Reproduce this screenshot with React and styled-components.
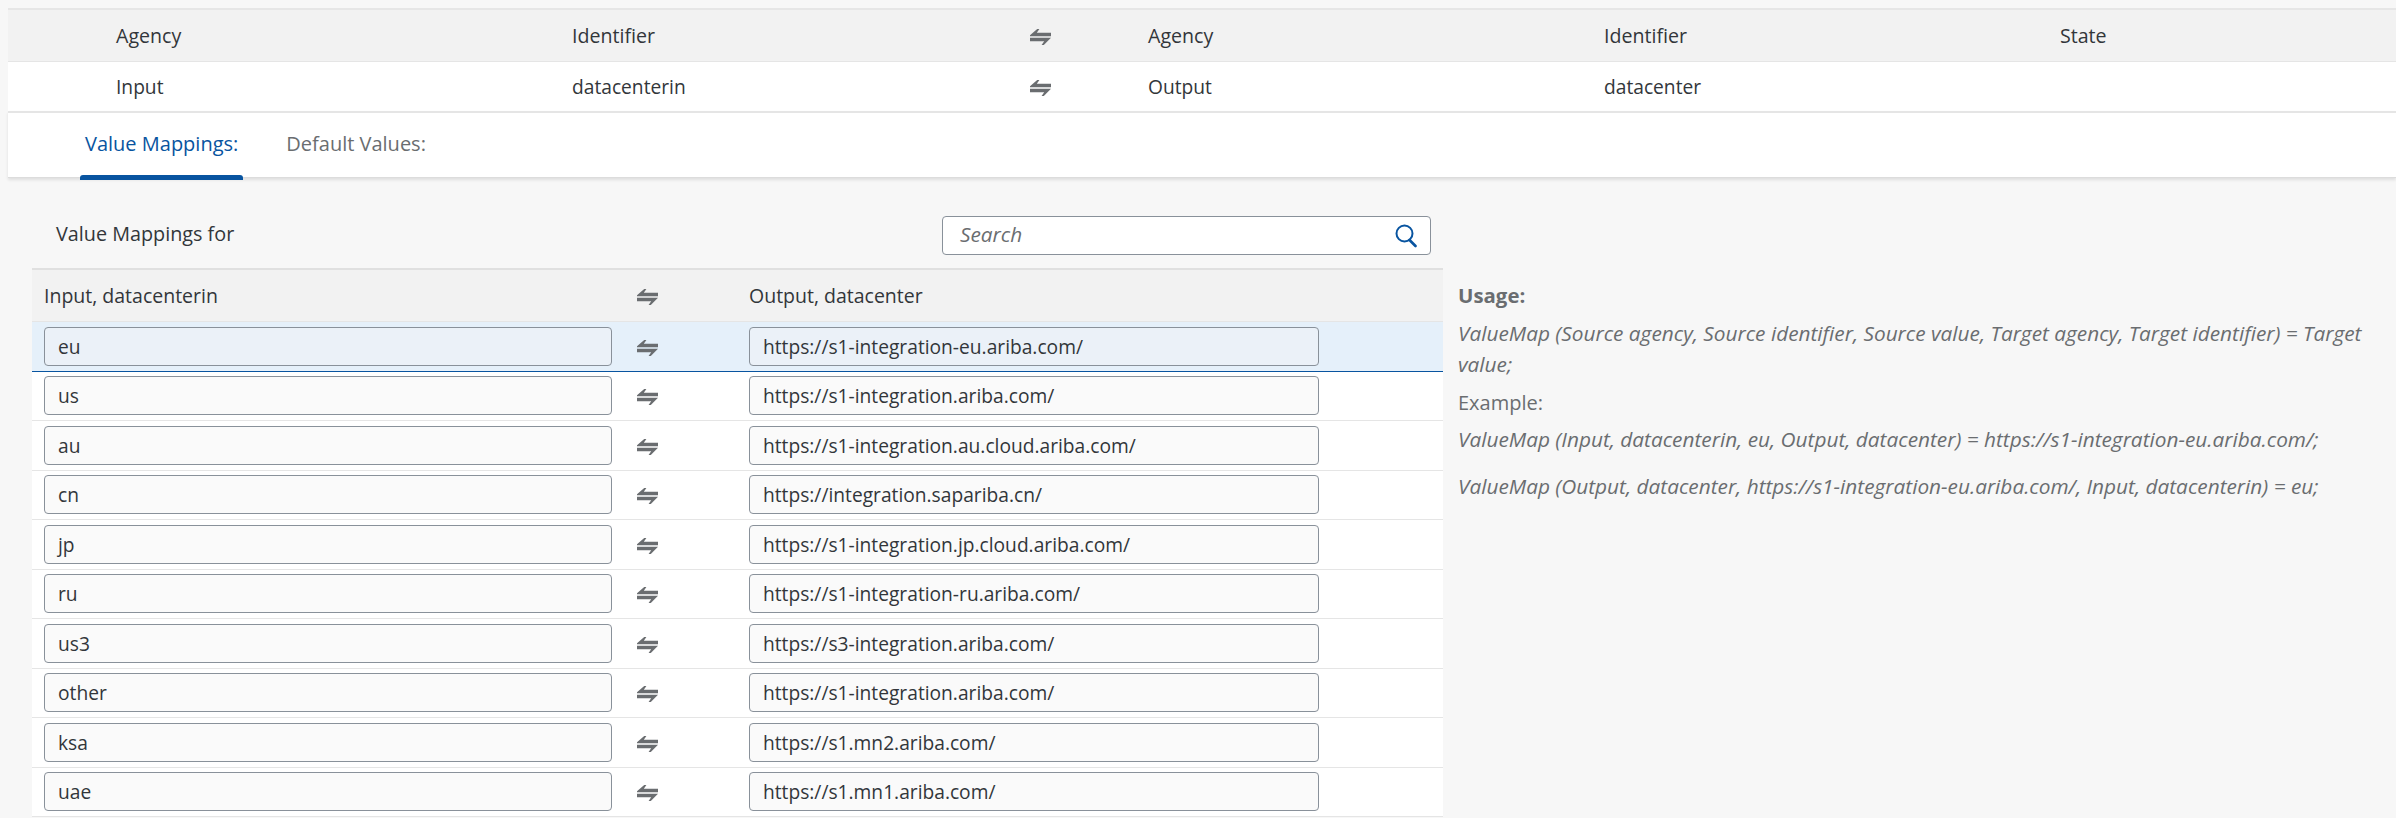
import React from "react";
import styled, { createGlobalStyle } from "styled-components";

const Global = createGlobalStyle`
  html, body { margin: 0; padding: 0; background: #f7f7f7; height: 818px; overflow: hidden; }
  body { font-family: "Open Sans", "Noto Sans", sans-serif; font-size: 19.2px; color: #32363a; }
  * { box-sizing: border-box; }
`;

const Page = styled.div`
  padding: 8px 0 0 8px;
  height: 818px;
  overflow: hidden;
`;

const SummaryGrid = styled.div`
  display: grid;
  grid-template-columns: 456px 458px 118px 456px 456px 1fr;
  align-items: center;
  padding-left: 108px;
  height: ${p => p.$header ? "54px" : "49px"};
  font-size: ${p => p.$header ? "19.6px" : "19.2px"};
  background: ${p => p.$header ? "#f2f2f2" : "#fff"};
  border-top: ${p => p.$header ? "2px solid #e6e6e6" : "none"};
  border-bottom: ${p => p.$header ? "1px solid #e5e5e5" : "none"};
`;

const Tabs = styled.div`
  display: flex;
  height: 67px;
  padding-left: 72px;
  gap: 38px;
  background: #fff;
  border-top: 2px solid #e5e5e5;
  border-bottom: 1px solid #dcdcdc;
  box-shadow: 0 2px 3px rgba(0, 0, 0, 0.1);
`;

const Tab = styled.div`
  position: relative;
  padding: 20px 5px 0;
  height: 65px;
  font-size: 20px;
  line-height: 22px;
  color: ${p => p.$active ? "#0854a0" : "#6a6d70"};
  &::after {
    content: "";
    display: ${p => p.$active ? "block" : "none"};
    position: absolute;
    left: 0;
    right: 0;
    bottom: -2px;
    height: 5px;
    background: #0854a0;
    border-radius: 3px 3px 0 0;
  }
`;

const Main = styled.div`
  display: flex;
  padding-left: 24px;
`;

const Left = styled.div`
  width: 1411px;
  flex: none;
`;

const Toolbar = styled.div`
  display: flex;
  align-items: center;
  justify-content: space-between;
  height: 90px;
  padding: 37px 12px 12px 24px;
`;

const ToolbarLabel = styled.div`
  font-size: 19.8px;
  line-height: 26px;
  padding-bottom: 3px;
`;

const SearchBox = styled.div`
  display: flex;
  align-items: center;
  justify-content: space-between;
  width: 489px;
  height: 39px;
  padding: 0 13px 0 17px;
  background: #fff;
  border: 1px solid #89919a;
  border-radius: 4px;
  color: #6a6d70;
  font-style: italic;
  font-size: 20.8px;
`;

const SearchText = styled.span`
  padding-bottom: 3px;
`;

const TableHead = styled.div`
  display: grid;
  grid-template-columns: 593px 112px 1fr;
  align-items: center;
  height: 54px;
  padding-left: 12px;
  font-size: 19.5px;
  background: #f2f2f2;
  border-top: 2px solid #e0e0e0;
  border-bottom: 1px solid #e5e5e5;
`;

const Row = styled.div`
  display: grid;
  grid-template-columns: 593px 112px 1fr;
  align-items: center;
  height: 49.5px;
  padding: 1px 0 0 12px;
  background: ${p => p.$selected ? "#e5f0fa" : "#fff"};
  border-bottom: 1px solid ${p => p.$selected ? "#0854a0" : "#e5e5e5"};
`;

const Field = styled.div`
  display: flex;
  align-items: center;
  width: ${p => p.$wide ? "570px" : "568px"};
  height: 39px;
  padding: 0 13px;
  background: ${p => p.$selected ? "#ebf1f8" : "#fafafa"};
  border: 1px solid #89919a;
  border-radius: 4px;
  margin-top: -1px;
`;

const Panel = styled.div`
  flex: none;
  width: 925px;
  margin-left: 15px;
  padding-top: 102px;
  color: #6a6d70;
  line-height: 31px;
`;

const Title = styled.div`
  font-weight: 700;
  font-size: 20.4px;
`;

const Formula = styled.div`
  font-style: italic;
  font-size: 20.8px;
  margin-top: ${p => p.$gap}px;
`;

const Caption = styled.div`
  font-size: 20px;
  margin-top: 7px;
`;

const IconSvg = styled.svg`
  display: block;
  width: 21px;
  height: 16px;
  fill: #6a6d70;
  margin-top: 2px;
`;

const SwapIcon = () => (
  <IconSvg viewBox="0 0 21 16">
    <path d="M0 6.2 7.2 0H9.4L6.8 3.8H21V7.2H0Z" />
    <path d="M0 8.8H21L13.8 16H11.6L14.2 12.2H0Z" />
  </IconSvg>
);

const SearchIcon = () => (
  <svg width="22" height="24" viewBox="0 0 22 24" fill="none" stroke="#0854a0" strokeWidth="2">
    <circle cx="9.5" cy="9.5" r="8" />
    <path d="M14.5 16 20.5 22" strokeWidth="2.6" strokeLinecap="round" />
  </svg>
);

const rows = [
  ["eu", "https://s1-integration-eu.ariba.com/"],
  ["us", "https://s1-integration.ariba.com/"],
  ["au", "https://s1-integration.au.cloud.ariba.com/"],
  ["cn", "https://integration.sapariba.cn/"],
  ["jp", "https://s1-integration.jp.cloud.ariba.com/"],
  ["ru", "https://s1-integration-ru.ariba.com/"],
  ["us3", "https://s3-integration.ariba.com/"],
  ["other", "https://s1-integration.ariba.com/"],
  ["ksa", "https://s1.mn2.ariba.com/"],
  ["uae", "https://s1.mn1.ariba.com/"],
];

export default function App() {
  return (
    <Page>
      <Global />
      <SummaryGrid $header>
        <div>Agency</div><div>Identifier</div><SwapIcon />
        <div>Agency</div><div>Identifier</div><div>State</div>
      </SummaryGrid>
      <SummaryGrid>
        <div>Input</div><div>datacenterin</div><SwapIcon />
        <div>Output</div><div>datacenter</div><div />
      </SummaryGrid>
      <Tabs>
        <Tab $active>Value Mappings:</Tab>
        <Tab>Default Values:</Tab>
      </Tabs>
      <Main>
        <Left>
          <Toolbar>
            <ToolbarLabel>Value Mappings for</ToolbarLabel>
            <SearchBox><SearchText>Search</SearchText><SearchIcon /></SearchBox>
          </Toolbar>
          <TableHead>
            <div>Input, datacenterin</div>
            <SwapIcon />
            <div>Output, datacenter</div>
          </TableHead>
          {rows.map(([a, b], i) => (
            <Row key={a} $selected={i === 0}>
              <Field $selected={i === 0}>{a}</Field>
              <SwapIcon />
              <Field $wide $selected={i === 0}>{b}</Field>
            </Row>
          ))}
        </Left>
        <Panel>
          <Title>Usage:</Title>
          <Formula $gap={7}>ValueMap (Source agency, Source identifier, Source value, Target agency, Target identifier) = Target value;</Formula>
          <Caption>Example:</Caption>
          <Formula $gap={6}>ValueMap (Input, datacenterin, eu, Output, datacenter) = https://s1-integration-eu.ariba.com/;</Formula>
          <Formula $gap={16}>ValueMap (Output, datacenter, https://s1-integration-eu.ariba.com/, Input, datacenterin) = eu;</Formula>
        </Panel>
      </Main>
    </Page>
  );
}
